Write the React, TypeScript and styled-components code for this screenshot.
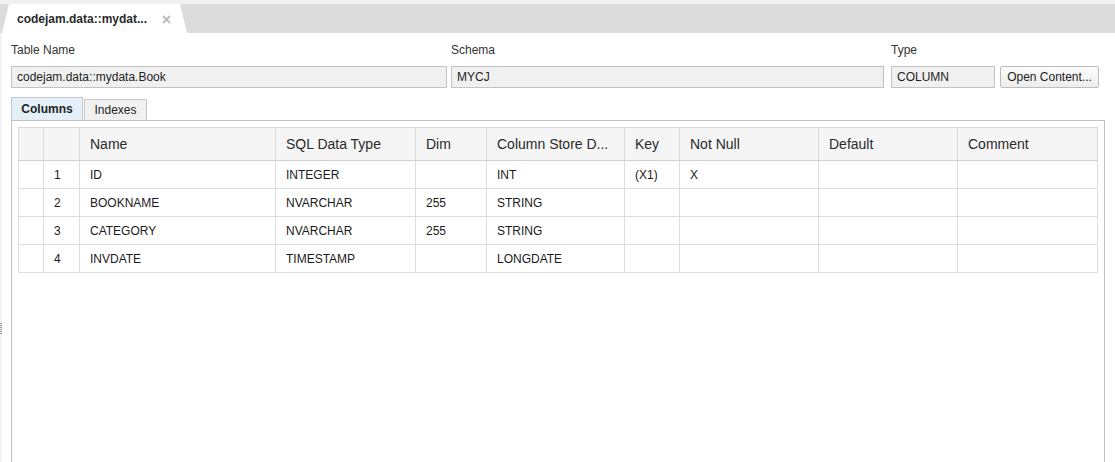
import React from "react";
import styled, { createGlobalStyle } from "styled-components";

const GlobalStyle = createGlobalStyle`
  html, body { margin: 0; padding: 0; background: #ffffff; }
  body { font-family: "Liberation Sans", Arial, sans-serif; }
  * { box-sizing: border-box; }
`;

const Page = styled.div`
  width: 1115px;
  height: 462px;
  display: flex;
  flex-direction: column;
  overflow: hidden;
  background: #fff;
`;

const TabBar = styled.div`
  height: 33px;
  flex: none;
  background: #dcdcdc;
  border-top: 4px solid #f0f0f0;
  display: flex;
  align-items: flex-end;
  padding-left: 2px;
`;

const EditorTab = styled.div`
  width: 185px;
  height: 29px;
  background: #fff;
  clip-path: polygon(7px 0, 178px 0, 185px 100%, 0 100%);
  display: flex;
  align-items: center;
  padding: 1px 0 0 15px;
  gap: 15px;
`;

const TabTitle = styled.span`
  font-size: 12px;
  font-weight: bold;
  color: #2a2a2a;
`;

const CloseIcon = styled.svg`
  width: 9px;
  height: 9px;
  flex: none;
`;

const Body = styled.div`
  flex: 1;
  display: flex;
  flex-direction: column;
  padding: 9px 11px 0 11px;
  min-height: 0;
  position: relative;
  border-left: 2px solid #f3f3f3;
`;

const Header = styled.div`
  display: grid;
  grid-template-columns: 440px 440px 109px 99px;
  row-gap: 8px;
  margin-left: -2px;
`;

const Label = styled.div`
  font-size: 12px;
  color: #333;
  height: 15px;
  line-height: 15px;
  margin-top: 1px;
`;

const Field = styled.div<{ $w: number }>`
  width: ${(p) => p.$w}px;
  height: 22px;
  border: 1px solid #c3c3c3;
  background: #f0f0f0;
  font-size: 12px;
  color: #1e1e1e;
  line-height: 20px;
  padding-left: 5px;
`;

const Button = styled.button`
  width: 99px;
  height: 22px;
  border: 1px solid #bdbdbd;
  border-radius: 2px;
  background: linear-gradient(#fbfbfb, #ededed);
  font-family: "Liberation Sans", Arial, sans-serif;
  font-size: 12px;
  color: #222;
  padding: 0;
`;

const TabStrip = styled.div`
  display: flex;
  align-items: flex-end;
  margin-top: 9px;
  margin-left: -2px;
  height: 23px;
`;

const ViewTab = styled.div<{ $active?: boolean; $w: number }>`
  width: ${(p) => p.$w}px;
  height: ${(p) => (p.$active ? "23px" : "21px")};
  border: 1px solid #c6c6c6;
  border-bottom: none;
  background: ${(p) => (p.$active ? "#e4f0f8" : "#f1f1f1")};
  font-size: 12px;
  font-weight: ${(p) => (p.$active ? "bold" : "normal")};
  color: #222;
  display: flex;
  align-items: center;
  justify-content: center;
  margin-right: 1px;
`;

const Panel = styled.div`
  flex: 1;
  border: 1px solid #c2c2c2;
  border-bottom: none;
  margin-left: -2px;
  margin-right: -1px;
  padding: 6px 6px 0 6px;
`;

const Table = styled.table`
  border-collapse: collapse;
  table-layout: fixed;
  width: 1079px;
`;

const Th = styled.th`
  height: 33px;
  background: #f5f5f5;
  border: 1px solid #d9d9d9;
  border-bottom-color: #d0d0d0;
  font-size: 14px;
  font-weight: normal;
  color: #2a2a2a;
  text-align: left;
  padding: 0 0 0 10px;
  white-space: nowrap;
  overflow: hidden;
  text-overflow: ellipsis;
`;

const Td = styled.td`
  height: 28px;
  border: 1px solid #dedede;
  font-size: 12px;
  color: #1a1a1a;
  padding: 1px 0 0 10px;
  white-space: nowrap;
  overflow: hidden;
`;

const Sash = styled.div`
  position: absolute;
  left: -2px;
  top: 290px;
  width: 2px;
  height: 11px;
  background: repeating-linear-gradient(#9a9a9a 0 1px, transparent 1px 2px);
`;

const widths = [25, 36, 196, 140, 71, 138, 55, 139, 139, 140];
const headers = ["", "", "Name", "SQL Data Type", "Dim", "Column Store D...", "Key", "Not Null", "Default", "Comment"];
const rows = [
  ["", "1", "ID", "INTEGER", "", "INT", "(X1)", "X", "", ""],
  ["", "2", "BOOKNAME", "NVARCHAR", "255", "STRING", "", "", "", ""],
  ["", "3", "CATEGORY", "NVARCHAR", "255", "STRING", "", "", "", ""],
  ["", "4", "INVDATE", "TIMESTAMP", "", "LONGDATE", "", "", "", ""],
];

export default function App() {
  return (
    <Page>
      <GlobalStyle />
      <TabBar>
        <EditorTab>
          <TabTitle>codejam.data::mydat...</TabTitle>
          <CloseIcon viewBox="0 0 9 9">
            <path d="M1 1 L8 8 M8 1 L1 8" stroke="#bcbcbc" strokeWidth="2" />
          </CloseIcon>
        </EditorTab>
      </TabBar>
      <Body>
        <Sash />
        <Header>
          <Label>Table Name</Label>
          <Label>Schema</Label>
          <Label>Type</Label>
          <Label />
          <Field $w={436}>codejam.data::mydata.Book</Field>
          <Field $w={433}>MYCJ</Field>
          <Field $w={104}>COLUMN</Field>
          <Button>Open Content...</Button>
        </Header>
        <TabStrip>
          <ViewTab $active $w={72}>Columns</ViewTab>
          <ViewTab $w={63}>Indexes</ViewTab>
        </TabStrip>
        <Panel>
          <Table>
            <colgroup>
              {widths.map((w, i) => (
                <col key={i} style={{ width: w }} />
              ))}
            </colgroup>
            <thead>
              <tr>
                {headers.map((h, i) => (
                  <Th key={i}>{h}</Th>
                ))}
              </tr>
            </thead>
            <tbody>
              {rows.map((r, ri) => (
                <tr key={ri}>
                  {r.map((c, ci) => (
                    <Td key={ci}>{c}</Td>
                  ))}
                </tr>
              ))}
            </tbody>
          </Table>
        </Panel>
      </Body>
    </Page>
  );
}
